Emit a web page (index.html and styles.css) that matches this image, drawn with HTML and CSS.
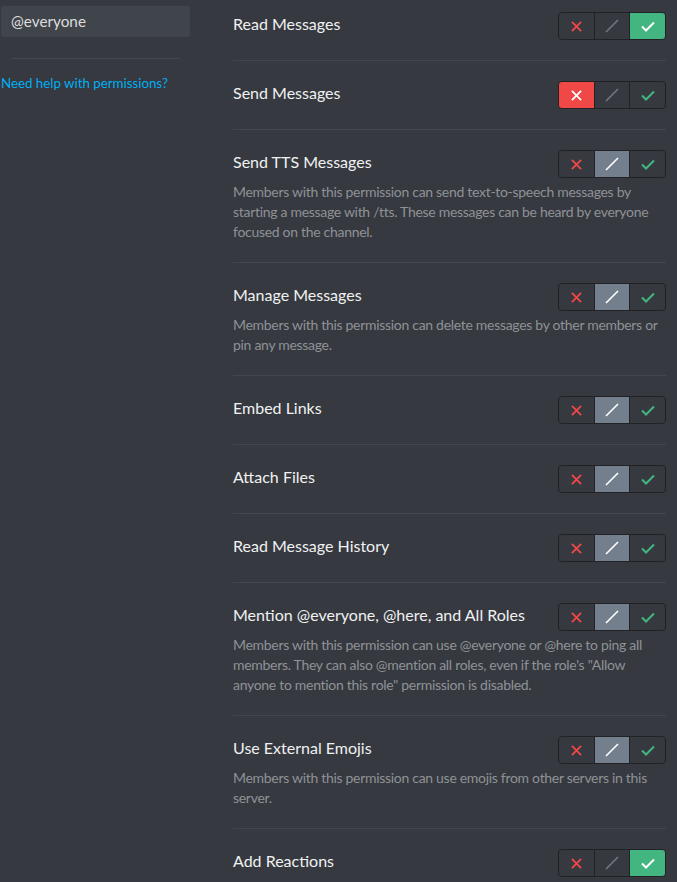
FILE: index.html
```html
<!DOCTYPE html>
<html>
<head>
<meta charset="utf-8">
<link rel="stylesheet" href="styles.css">
</head>
<body>
<div class="layout">
  <aside class="sidebar">
    <div class="role">@everyone</div>
    <div class="side-sep"></div>
    <a class="help">Need help with permissions?</a>
  </aside>
  <main class="perms">
    <div class="perm">
      <div class="perm-head"><div class="perm-title">Read Messages</div>
        <div class="toggle"><span class="seg deny"><svg viewBox="0 0 12 12"><path d="M1 1L11 11M11 1L1 11"/></svg></span><span class="seg neutral"><svg viewBox="0 0 14 14"><path d="M1 13L13 1"/></svg></span><span class="seg allow on"><svg viewBox="0 0 14 11"><path d="M1 5.5L5 9.5L13 1.5"/></svg></span></div>
      </div>
    </div>
    <div class="perm">
      <div class="perm-head"><div class="perm-title">Send Messages</div>
        <div class="toggle"><span class="seg deny on"><svg viewBox="0 0 12 12"><path d="M1 1L11 11M11 1L1 11"/></svg></span><span class="seg neutral"><svg viewBox="0 0 14 14"><path d="M1 13L13 1"/></svg></span><span class="seg allow"><svg viewBox="0 0 14 11"><path d="M1 5.5L5 9.5L13 1.5"/></svg></span></div>
      </div>
    </div>
    <div class="perm">
      <div class="perm-head"><div class="perm-title">Send TTS Messages</div>
        <div class="toggle"><span class="seg deny"><svg viewBox="0 0 12 12"><path d="M1 1L11 11M11 1L1 11"/></svg></span><span class="seg neutral on"><svg viewBox="0 0 14 14"><path d="M1 13L13 1"/></svg></span><span class="seg allow"><svg viewBox="0 0 14 11"><path d="M1 5.5L5 9.5L13 1.5"/></svg></span></div>
      </div>
      <div class="perm-desc">Members with this permission can send text-to-speech messages by starting a message with /tts. These messages can be heard by everyone focused on the channel.</div>
    </div>
    <div class="perm">
      <div class="perm-head"><div class="perm-title">Manage Messages</div>
        <div class="toggle"><span class="seg deny"><svg viewBox="0 0 12 12"><path d="M1 1L11 11M11 1L1 11"/></svg></span><span class="seg neutral on"><svg viewBox="0 0 14 14"><path d="M1 13L13 1"/></svg></span><span class="seg allow"><svg viewBox="0 0 14 11"><path d="M1 5.5L5 9.5L13 1.5"/></svg></span></div>
      </div>
      <div class="perm-desc">Members with this permission can delete messages by other members or pin any message.</div>
    </div>
    <div class="perm">
      <div class="perm-head"><div class="perm-title">Embed Links</div>
        <div class="toggle"><span class="seg deny"><svg viewBox="0 0 12 12"><path d="M1 1L11 11M11 1L1 11"/></svg></span><span class="seg neutral on"><svg viewBox="0 0 14 14"><path d="M1 13L13 1"/></svg></span><span class="seg allow"><svg viewBox="0 0 14 11"><path d="M1 5.5L5 9.5L13 1.5"/></svg></span></div>
      </div>
    </div>
    <div class="perm">
      <div class="perm-head"><div class="perm-title">Attach Files</div>
        <div class="toggle"><span class="seg deny"><svg viewBox="0 0 12 12"><path d="M1 1L11 11M11 1L1 11"/></svg></span><span class="seg neutral on"><svg viewBox="0 0 14 14"><path d="M1 13L13 1"/></svg></span><span class="seg allow"><svg viewBox="0 0 14 11"><path d="M1 5.5L5 9.5L13 1.5"/></svg></span></div>
      </div>
    </div>
    <div class="perm">
      <div class="perm-head"><div class="perm-title">Read Message History</div>
        <div class="toggle"><span class="seg deny"><svg viewBox="0 0 12 12"><path d="M1 1L11 11M11 1L1 11"/></svg></span><span class="seg neutral on"><svg viewBox="0 0 14 14"><path d="M1 13L13 1"/></svg></span><span class="seg allow"><svg viewBox="0 0 14 11"><path d="M1 5.5L5 9.5L13 1.5"/></svg></span></div>
      </div>
    </div>
    <div class="perm">
      <div class="perm-head"><div class="perm-title">Mention @everyone, @here, and All Roles</div>
        <div class="toggle"><span class="seg deny"><svg viewBox="0 0 12 12"><path d="M1 1L11 11M11 1L1 11"/></svg></span><span class="seg neutral on"><svg viewBox="0 0 14 14"><path d="M1 13L13 1"/></svg></span><span class="seg allow"><svg viewBox="0 0 14 11"><path d="M1 5.5L5 9.5L13 1.5"/></svg></span></div>
      </div>
      <div class="perm-desc">Members with this permission can use @everyone or @here to ping all members. They can also @mention all roles, even if the role's "Allow anyone to mention this role" permission is disabled.</div>
    </div>
    <div class="perm">
      <div class="perm-head"><div class="perm-title">Use External Emojis</div>
        <div class="toggle"><span class="seg deny"><svg viewBox="0 0 12 12"><path d="M1 1L11 11M11 1L1 11"/></svg></span><span class="seg neutral on"><svg viewBox="0 0 14 14"><path d="M1 13L13 1"/></svg></span><span class="seg allow"><svg viewBox="0 0 14 11"><path d="M1 5.5L5 9.5L13 1.5"/></svg></span></div>
      </div>
      <div class="perm-desc">Members with this permission can use emojis from other servers in this server.</div>
    </div>
    <div class="perm">
      <div class="perm-head"><div class="perm-title">Add Reactions</div>
        <div class="toggle"><span class="seg deny"><svg viewBox="0 0 12 12"><path d="M1 1L11 11M11 1L1 11"/></svg></span><span class="seg neutral"><svg viewBox="0 0 14 14"><path d="M1 13L13 1"/></svg></span><span class="seg allow on"><svg viewBox="0 0 14 11"><path d="M1 5.5L5 9.5L13 1.5"/></svg></span></div>
      </div>
    </div>
  </main>
</div>
</body>
</html>
```

FILE: styles.css
```css
html, body {
  margin: 0;
  padding: 0;
  background: #36393f;
  overflow: hidden;
}
body {
  font-family: Lato, "Noto Sans", sans-serif;
  color: #dcddde;
}
.layout {
  display: flex;
  align-items: flex-start;
  gap: 43px;
}
.sidebar {
  width: 190px;
  flex: none;
}
.role {
  margin-top: 6px;
  margin-left: 1px;
  height: 31px;
  line-height: 31px;
  padding-left: 10px;
  font-size: 15.3px;
  color: #dcddde;
  background: #40444b;
  border-radius: 3px;
}
.side-sep {
  margin: 21px 10px 0 11px;
  height: 1px;
  background: #43464c;
}
.help {
  display: block;
  margin-top: 16px;
  padding-left: 1px;
  font-size: 13.3px;
  line-height: 16px;
  color: #00b0f4;
}
.perms {
  width: 433px;
  flex: none;
  margin-top: -8px;
}
.perm {
  padding: 20px 0;
  border-bottom: 1px solid #43464c;
}
.perm-head {
  display: flex;
  align-items: center;
  justify-content: space-between;
  height: 28px;
}
.perm-title {
  padding-bottom: 6px;
  font-size: 16px;
  font-weight: 400;
  color: #f0f1f2;
}
.perm-desc {
  margin-top: 4px;
  font-size: 14px;
  letter-spacing: -0.3px;
  line-height: 20px;
  color: #8e9297;
}
.toggle {
  display: flex;
  width: 108px;
  height: 28px;
  box-sizing: border-box;
  border: 1px solid #202225;
  border-radius: 4px;
  overflow: hidden;
}
.seg {
  flex: 1;
  display: flex;
  align-items: center;
  justify-content: center;
}
.seg + .seg {
  border-left: 1px solid #202225;
}
.seg svg {
  fill: none;
  stroke-width: 2;
}
.deny svg { width: 11px; height: 11px; stroke: #f04747; }
.neutral svg { width: 14px; height: 14px; stroke: #72767d; stroke-width: 1.6; }
.allow svg { width: 14px; height: 11px; stroke: #43b581; }
.deny.on { background: #f04747; }
.neutral.on { background: #737f8d; }
.allow.on { background: #43b581; }
.seg.on svg { stroke: #ffffff; }
```
